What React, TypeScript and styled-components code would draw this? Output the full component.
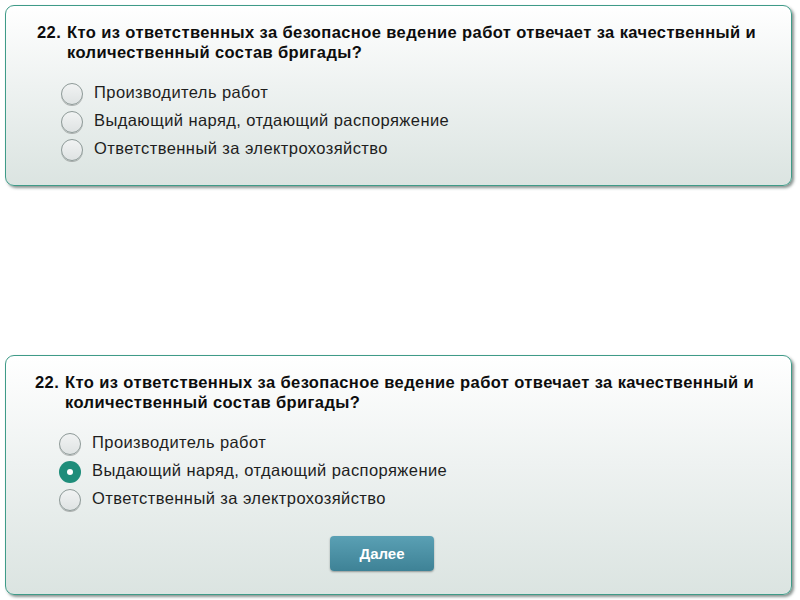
import styled, { createGlobalStyle } from "styled-components";

const GlobalStyle = createGlobalStyle`
  html, body {
    margin: 0;
    padding: 0;
    background: #ffffff;
    font-family: "Liberation Sans", Arial, sans-serif;
  }
`;

const options = [
  "Производитель работ",
  "Выдающий наряд, отдающий распоряжение",
  "Ответственный за электрохозяйство",
];

interface CardProps {
  selected?: number;
  withButton?: boolean;
}

function QuestionCard({ selected, withButton }: CardProps) {
  return (
    <Card $tall={withButton}>
      <Question>
        <span>22.</span>
        <span>Кто из ответственных за безопасное ведение работ отвечает за качественный и количественный состав бригады?</span>
      </Question>
      <Options>
        {options.map((v, i) => (
          <Option key={i}>
            <Radio $checked={selected === i} />
            {v}
          </Option>
        ))}
      </Options>
      {withButton && (
        <ButtonRow>
          <NextButton>Далее</NextButton>
        </ButtonRow>
      )}
    </Card>
  );
}

export default function App() {
  return (
    <>
      <GlobalStyle />
      <Page>
        <QuestionCard />
        <QuestionCard selected={1} withButton />
      </Page>
    </>
  );
}

const Page = styled.div`
  width: 800px;
  height: 600px;
  box-sizing: border-box;
  padding: 5px 8px 0 5px;
  display: flex;
  flex-direction: column;
  gap: 169px;
`;

const Card = styled.div<{ $tall?: boolean }>`
  box-sizing: border-box;
  height: ${p => (p.$tall ? 240 : 181)}px;
  border: 1px solid #3f9b88;
  border-radius: 9px;
  background: linear-gradient(to bottom, #ffffff 0%, #eef2f1 45%, #dbe4e1 100%);
  box-shadow: 2px 2px 3px rgba(40, 60, 55, 0.55);
  padding: 16px 20px 0 ${p => (p.$tall ? 29 : 31)}px;
`;

const Question = styled.div`
  display: grid;
  grid-template-columns: 30px 1fr;
  font-size: 16.5px;
  font-weight: bold;
  line-height: 20px;
  letter-spacing: 0.4px;
  color: #0d0d0d;
`;

const Options = styled.div`
  margin-top: 19px;
  padding-left: 24px;
  display: flex;
  flex-direction: column;
  gap: 6px;
`;

const Option = styled.div`
  display: flex;
  align-items: center;
  gap: 11px;
  height: 22px;
  font-size: 16.5px;
  letter-spacing: 0.42px;
  color: #1e1e1e;
`;

const Radio = styled.span<{ $checked?: boolean }>`
  box-sizing: border-box;
  width: 22px;
  height: 22px;
  border-radius: 50%;
  flex-shrink: 0;
  border: ${p => (p.$checked ? "none" : "1px solid #8e9a98")};
  background: ${p => (p.$checked ? "#1e8d7a" : "linear-gradient(to bottom, #f1f3f3, #dfe3e3)")};
  box-shadow: ${p => (p.$checked ? "none" : "0 1px 0 rgba(0,0,0,0.25)")};
  position: relative;
  top: 2px;

  &::after {
    content: "";
    display: ${p => (p.$checked ? "block" : "none")};
    position: absolute;
    left: 8px;
    top: 8px;
    width: 6px;
    height: 6px;
    border-radius: 50%;
    background: #ffffff;
  }
`;

const ButtonRow = styled.div`
  display: flex;
  justify-content: center;
  margin-top: 27px;
  padding-right: 42px;
`;

const NextButton = styled.button`
  width: 104px;
  height: 35px;
  border: none;
  border-radius: 4px;
  background: linear-gradient(to bottom, #5aa0b4, #3e8296);
  box-shadow: 0 1px 2px rgba(0, 0, 0, 0.35);
  color: #ffffff;
  font-family: "Liberation Sans", Arial, sans-serif;
  font-size: 15px;
  font-weight: bold;
`;
